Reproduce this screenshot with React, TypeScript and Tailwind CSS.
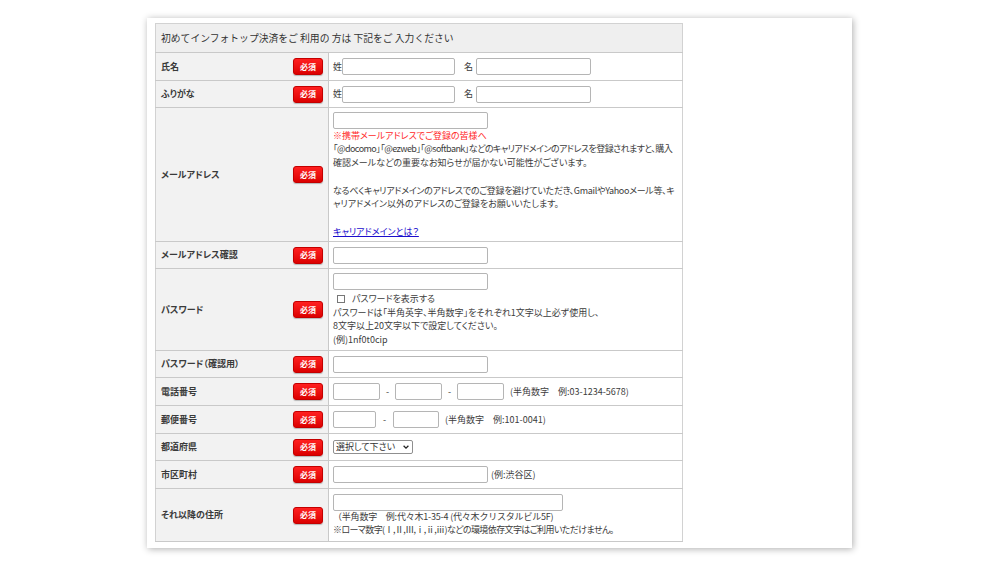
import React from 'react';

const jp = '[font-family:"Noto_Sans_CJK_JP","Noto_Sans",sans-serif] [font-feature-settings:"palt"]';

function Badge() {
  return (
    <span className="inline-flex h-[17px] w-[30px] shrink-0 items-center justify-center rounded-[3px] border border-[#c40000] bg-gradient-to-b from-[#ff1f1f] to-[#dc0000] text-[8px] font-bold leading-none text-white shadow-[0_1px_1px_rgba(0,0,0,0.25)]">
      必須
    </span>
  );
}

function Field({ w }: { w: string }) {
  return <input type="text" className={`block h-[17px] rounded-[2px] border border-[#b5b5b5] bg-white ${w}`} />;
}

function Row({ label, h, children }: { label: string; h: string; children: React.ReactNode }) {
  return (
    <tr className={h}>
      <td className="border-b border-r border-[#c9c9c9] bg-[#f2f2f2] px-[5px] align-middle">
        <div className="flex items-center justify-between">
          <span className="text-[9px] font-bold text-[#3a3a3a]">{label}</span>
          <Badge />
        </div>
      </td>
      <td className="border-b border-[#c9c9c9] bg-white pl-[4px] pr-2 align-middle text-[9px] text-[#3c3c3c]">
        {children}
      </td>
    </tr>
  );
}

export default function App() {
  return (
    <div className={`h-[562px] w-[1000px] overflow-hidden bg-white pt-[18px] ${jp}`}>
      <div className="ml-[147px] h-[530px] w-[705px] bg-white pl-[8px] pt-[5px] shadow-[1px_1px_7px_rgba(0,0,0,0.32)]">
        <table className="w-[528px] table-fixed border-collapse border border-[#d2d2d2]">
          <colgroup>
            <col className="w-[173px]" />
            <col />
          </colgroup>
          <tbody>
            <tr className="h-[29px]">
              <td colSpan={2} className="border-b border-[#c9c9c9] bg-[#efefef] pl-[5px] align-middle text-[9.8px] text-[#333] [font-feature-settings:normal]">
                初めてインフォトップ決済をご 利用の 方は 下記をご 入力ください
              </td>
            </tr>

            <Row label="氏名" h="h-[28px]">
              <div className="flex items-center">
                <span className="w-[9px]">姓</span>
                <Field w="w-[113px]" />
                <span className="ml-[9px] w-[9px]">名</span>
                <Field w="w-[115px] ml-[3px]" />
              </div>
            </Row>

            <Row label="ふりがな" h="h-[27px]">
              <div className="flex items-center">
                <span className="w-[9px]">姓</span>
                <Field w="w-[113px]" />
                <span className="ml-[9px] w-[9px]">名</span>
                <Field w="w-[115px] ml-[3px]" />
              </div>
            </Row>

            <Row label="メールアドレス" h="h-[134px]">
              <div className="pt-[1px] leading-[13.7px]">
                <Field w="w-[155px]" />
                <p className="text-[#ff2b2b]">※携帯メールアドレスでご登録の皆様へ</p>
                <p className="whitespace-nowrap tracking-[-0.55px]">
                  「@docomo」「@ezweb」「@softbank」などのキャリアドメインのアドレスを登録されますと、購入
                </p>
                <p>確認メールなどの重要なお知らせが届かない可能性がございます。</p>
                <p>&nbsp;</p>
                <p className="whitespace-nowrap tracking-[-0.3px]">
                  なるべくキャリアドメインのアドレスでのご登録を避けていただき、GmailやYahooメール等、キ
                </p>
                <p>ャリアドメイン以外のアドレスのご登録をお願いいたします。</p>
                <p>&nbsp;</p>
                <a href="#" className="text-[#1a0dcc] underline">キャリアドメインとは？</a>
              </div>
            </Row>

            <Row label="メールアドレス確認" h="h-[27px]">
              <Field w="w-[155px]" />
            </Row>

            <Row label="パスワード" h="h-[82px]">
              <div className="leading-[13.5px]">
                <Field w="w-[155px]" />
                <label className="mt-[2px] flex items-center">
                  <input type="checkbox" className="ml-[4px] h-[8px] w-[8px] appearance-none border border-[#777] bg-white" />
                  <span className="ml-[7px]">パスワードを表示する</span>
                </label>
                <p>パスワードは「半角英字、半角数字」をそれぞれ1文字以上必ず使用し、</p>
                <p>8文字以上20文字以下で設定してください。</p>
                <p>(例)1nf0t0cip</p>
              </div>
            </Row>

            <Row label="パスワード（確認用）" h="h-[27px]">
              <Field w="w-[155px]" />
            </Row>

            <Row label="電話番号" h="h-[28px]">
              <div className="flex items-center">
                <Field w="w-[47px]" />
                <span className="w-[15px] text-center">-</span>
                <Field w="w-[47px]" />
                <span className="w-[15px] text-center">-</span>
                <Field w="w-[47px]" />
                <span className="ml-[6px]">(半角数字　例:03-1234-5678)</span>
              </div>
            </Row>

            <Row label="郵便番号" h="h-[28px]">
              <div className="flex items-center">
                <Field w="w-[43px]" />
                <span className="w-[17px] text-center">-</span>
                <Field w="w-[46px]" />
                <span className="ml-[6px]">(半角数字　例:101-0041)</span>
              </div>
            </Row>

            <Row label="都道府県" h="h-[27px]">
              <div className="relative w-[80px]">
                <select className="block h-[14px] w-[80px] appearance-none rounded-[2px] border border-[#8f8f8f] bg-white pl-[2px] text-[9px] leading-[12px] text-[#333]">
                  <option>選択して下さい</option>
                </select>
                <svg viewBox="0 0 10 10" className="pointer-events-none absolute right-[3px] top-[3px] h-[8px] w-[8px]">
                  <path d="M2 3.5 L5 6.5 L8 3.5" fill="none" stroke="#222" strokeWidth="1.6" />
                </svg>
              </div>
            </Row>

            <Row label="市区町村" h="h-[28px]">
              <div className="flex items-center">
                <Field w="w-[155px]" />
                <span className="ml-[3px]">(例:渋谷区)</span>
              </div>
            </Row>

            <Row label="それ以降の住所" h="h-[53px]">
              <div className="leading-[12.5px]">
                <Field w="w-[230px]" />
                <p className="whitespace-nowrap tracking-[-0.2px] [font-feature-settings:normal]">（半角数字　例:代々木1-35-4 (代々木クリスタルビル5F)</p>
                <p className="whitespace-nowrap tracking-[-0.6px]">※ローマ数字(Ⅰ,Ⅱ,Ⅲ,ⅰ,ⅱ,ⅲ)などの環境依存文字はご利用いただけません。</p>
              </div>
            </Row>
          </tbody>
        </table>
      </div>
    </div>
  );
}
